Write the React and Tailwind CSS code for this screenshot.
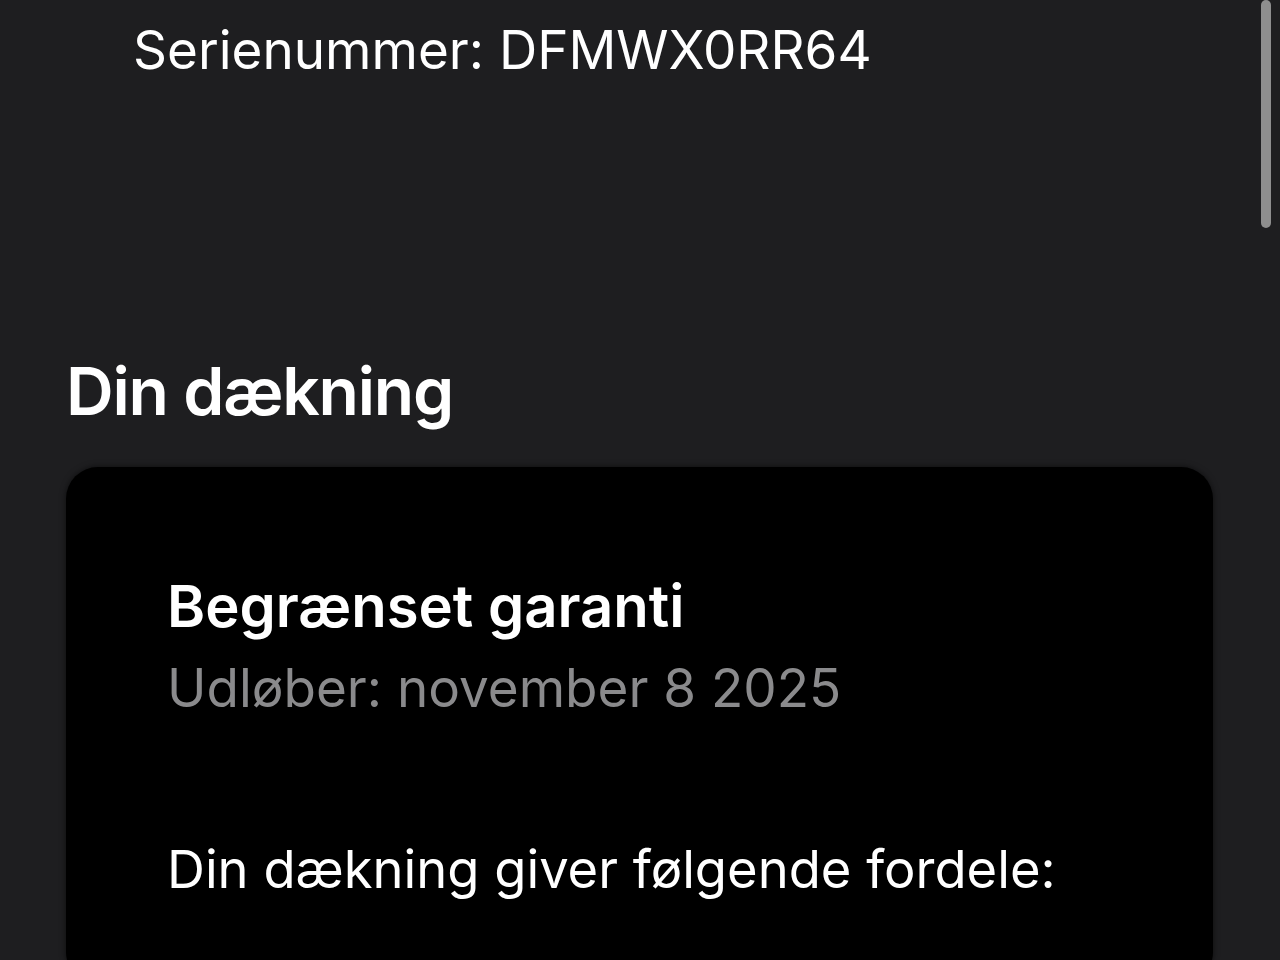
const Scrollbar = () => (
    <div className="absolute right-[9px] top-0 h-[228px] w-[10px] rounded-full bg-[#8e8e8e]" />
);

const App = () => {
    return (
        <div
            className="relative h-screen overflow-hidden bg-[#1e1e20] text-white"
            style={{ fontFamily: "Inter, 'Noto Sans', sans-serif" }}
        >
            <Scrollbar />

            {/* Serienummer */}
            <div className="pl-[133px] pt-[16px] text-[53px] leading-[68px]">
                Serienummer: DFMWX0RR64
            </div>

            {/* Din dækning */}
            <div className="pl-[66px] pt-[267px]">
                <h2 className="text-[66px] font-semibold leading-[80px] tracking-[-1.2px]">
                    Din dækning
                </h2>

                <div className="mt-[36px] w-[1147px] rounded-[32px] bg-black pl-[101px] pt-[104px] pb-[80px] shadow-[0_0_6px_rgba(0,0,0,0.6)]">
                    <div className="text-[58px] font-semibold leading-[70px]">
                        Begrænset garanti
                    </div>
                    <div className="mt-[12px] text-[53px] leading-[70px] text-[#8a8a8c]">
                        Udløber: november 8 2025
                    </div>
                    <div className="mt-[111px] text-[52.5px] leading-[70px]">
                        Din dækning giver følgende fordele:
                    </div>
                </div>
            </div>
        </div>
    );
};

export default App;
